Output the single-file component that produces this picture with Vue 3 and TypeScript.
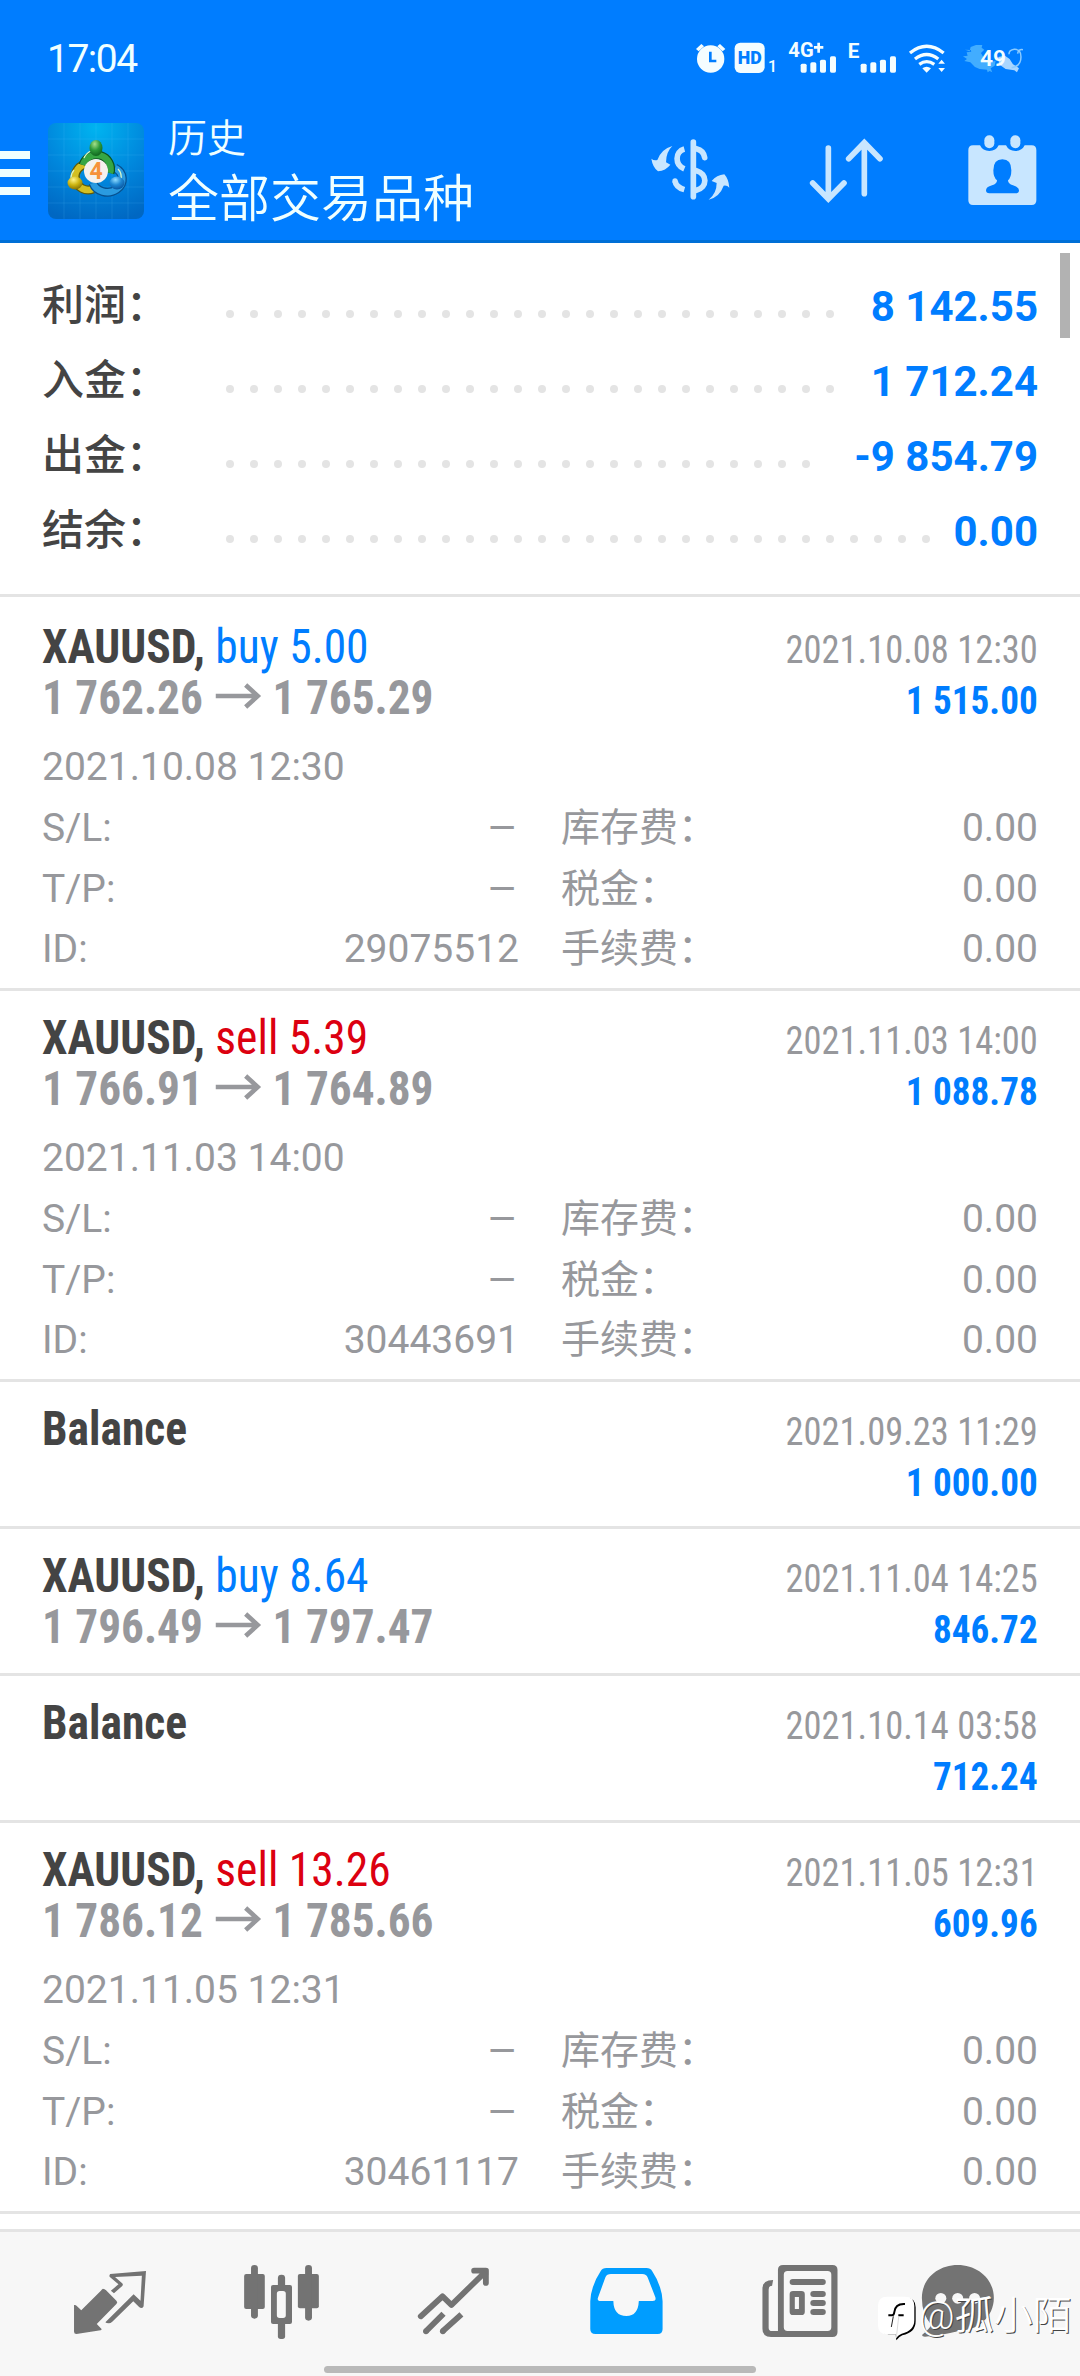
<script setup lang="ts">
interface Deal {
  side?: 'buy' | 'sell'
  volume?: string
  open?: string
  close?: string
  time: string
  profit: string
  id?: string
}

interface SummaryRow {
  label: string
  value: string
  dots: number
}

const summary: SummaryRow[] = [
  { label: '利润：', value: '8 142.55', dots: 26 },
  { label: '入金：', value: '1 712.24', dots: 26 },
  { label: '出金：', value: '-9 854.79', dots: 25 },
  { label: '结余：', value: '0.00', dots: 30 },
]

const deals: Deal[] = [
  { side: 'buy', volume: '5.00', open: '1 762.26', close: '1 765.29', time: '2021.10.08 12:30', profit: '1 515.00', id: '29075512' },
  { side: 'sell', volume: '5.39', open: '1 766.91', close: '1 764.89', time: '2021.11.03 14:00', profit: '1 088.78', id: '30443691' },
  { time: '2021.09.23 11:29', profit: '1 000.00' },
  { side: 'buy', volume: '8.64', open: '1 796.49', close: '1 797.47', time: '2021.11.04 14:25', profit: '846.72' },
  { time: '2021.10.14 03:58', profit: '712.24' },
  { side: 'sell', volume: '13.26', open: '1 786.12', close: '1 785.66', time: '2021.11.05 12:31', profit: '609.96', id: '30461117' },
]
</script>

<template>
  <div class="screen">
    <header class="header">
      <div class="status">
        <span class="clock">17:04</span>
        <svg class="status-icons" viewBox="160 115 1000 120" width="333.3" height="40">
          <g fill="#f4fdff">
            <circle cx="213" cy="178" r="41" />
            <path d="M169 148l16-15 8 7-16 15zM257 148l-16-15-8 7 16 15z" />
            <rect x="285" y="129" width="90" height="91" rx="17" />
            <rect x="483" y="192" width="18" height="27" rx="5" />
            <rect x="512" y="188" width="18" height="31" rx="5" />
            <rect x="541" y="180" width="18" height="39" rx="5" />
            <rect x="571" y="170" width="18" height="49" rx="5" />
            <rect x="663" y="192" width="18" height="27" rx="5" />
            <rect x="692" y="188" width="18" height="31" rx="5" />
            <rect x="721" y="180" width="18" height="39" rx="5" />
            <rect x="751" y="170" width="18" height="49" rx="5" />
            <path d="M848 206q13-9 26 0l-13 13zM906 180l10 12h-20zM906 217l10-12h-20z" />
          </g>
          <path d="M212 156v28h18" fill="none" stroke="#007dff" stroke-width="8" />
          <g fill="none" stroke="#f4fdff" stroke-width="10">
            <path d="M811 160q50-40 101 0M826 178q35-27 70 0M839 194q22-16 45 0" />
          </g>
          <text x="294" y="194" class="st" font-size="54" font-weight="900" fill="#007dff" textLength="72" lengthAdjust="spacingAndGlyphs">HD</text>
          <text x="385" y="216" class="st" font-size="48" font-weight="500">1</text>
          <text x="446" y="173" class="st" font-size="60" font-weight="700" textLength="76" lengthAdjust="spacingAndGlyphs">4G</text>
          <path d="M537 129v30M523 143h28" stroke="#f4fdff" stroke-width="8" />
          <text x="624" y="174" class="st" font-size="62" font-weight="700">E</text>
          <path d="M976 150l14 5 3-13 16-6 19 0-2 8 8 6-10 10 8 14 14 12 22-2-3 14-12 8 5 12-8-4-6 4-2-8-22-2-14-6-14-14-18-4 8-6-12-8 14-2-3-10 14-2-2-5z" fill="#42adff" />
          <path d="M1076 172l20-4 14 10 10 16 10 6 8 6-6 12-8-6-26-4-20-14z" fill="#a9d6ff" />
          <path d="M1116 204q28-4 28-32 0-24-20-23-16 2-16 15M1134 162q2-14 16-12" fill="none" stroke="#8bcbff" stroke-width="4.5" />
          <text x="1021" y="198" class="st" font-size="66" font-weight="600" textLength="78" lengthAdjust="spacingAndGlyphs">49</text>
        </svg>
      </div>
      <div class="toolbar">
        <div class="menu"><i></i><i></i><i></i></div>
        <svg class="logo" viewBox="0 0 96 96" width="96" height="96">
          <defs>
            <radialGradient id="bg" cx=".5" cy=".05" r="1">
              <stop offset="0" stop-color="#00b4f0" />
              <stop offset=".55" stop-color="#0086dc" />
              <stop offset="1" stop-color="#0067c2" />
            </radialGradient>
            <radialGradient id="gr" cx=".4" cy=".25" r=".8"><stop offset="0" stop-color="#a5e08a" /><stop offset=".5" stop-color="#2c9a3a" /><stop offset="1" stop-color="#0d5f1d" /></radialGradient>
            <radialGradient id="ye" cx=".4" cy=".25" r=".8"><stop offset="0" stop-color="#fff48a" /><stop offset=".5" stop-color="#cdb512" /><stop offset="1" stop-color="#7d6c05" /></radialGradient>
            <radialGradient id="bl" cx=".4" cy=".25" r=".8"><stop offset="0" stop-color="#8fdcff" /><stop offset=".5" stop-color="#1d86d2" /><stop offset="1" stop-color="#07509a" /></radialGradient>
          </defs>
          <rect width="96" height="96" rx="8" fill="url(#bg)" />
          <path d="M16 0v96M32 0v96M48 0v96M64 0v96M80 0v96M0 16h96M0 32h96M0 48h96M0 64h96M0 80h96" stroke="#5fd0ff" stroke-opacity=".15" stroke-width="1" />
          <g fill="none">
            <path d="M45 66a13 13 0 1 1-6-25" stroke="#5f5a08" stroke-width="9" />
            <path d="M45 66a13 13 0 1 1-6-25" stroke="#d3bf22" stroke-width="6.5" />
            <path d="M45 60a15 13 0 1 0 22-15" stroke="#07518f" stroke-width="9" />
            <path d="M45 60a15 13 0 1 0 22-15" stroke="#2a9be0" stroke-width="6.5" />
            <path d="M35 42a14 14 0 1 1 27 8" stroke="#0c5420" stroke-width="9" />
            <path d="M35 42a14 14 0 1 1 27 8" stroke="#36a644" stroke-width="6.5" />
            <path d="M36 35a14 13 0 0 1 7-7M26 47a13 12 0 0 0-3 8M70 46q4 4 3 11" stroke="#d8f5c8" stroke-width="1.3" />
          </g>
          <ellipse cx="48" cy="25" rx="6.5" ry="8" fill="url(#gr)" />
          <ellipse cx="27" cy="60" rx="7.5" ry="6.5" fill="url(#ye)" />
          <ellipse cx="69" cy="60" rx="7.5" ry="6.5" fill="url(#bl)" />
          <circle cx="48" cy="48" r="12" fill="#f4f1ee" />
          <text x="48" y="56" text-anchor="middle" class="four">4</text>
        </svg>
        <div class="titles">
          <span class="sub">历史</span>
          <span class="main">全部交易品种</span>
        </div>
        <svg class="tool" viewBox="20 395 260 220" width="86.7" height="73.3">
          <g fill="none" stroke="#c8e6ff" stroke-width="17" stroke-linecap="round">
            <path d="M159 425v164" />
            <path d="M132 446c-29 8-29 48 0 60M132 568q-25-7-28-26" stroke-linecap="butt" />
            <path d="M168 445q22 5 25 27M168 511c34 9 34 51 0 59" />
          </g>
          <circle cx="104" cy="542" r="8" fill="#c8e6ff" />
          <path d="M96 437q-19 18-19 49l13 7q-14 18-37 20-16-12-20-38 8 7 18 4 12-33 45-42z" fill="#c8e6ff" />
          <path d="M205 598q24-18 24-50l-15-6q15-18 38-20 13 14 15 40-7-8-17-6-12 34-45 42z" fill="#c8e6ff" />
        </svg>
        <svg class="tool" viewBox="500 395 240 220" width="80" height="73.3">
          <path d="M564 443v152M517 548l47 48 47-48M672 580v-152M625 475l47-48 47 48" fill="none" stroke="#c8e6ff" stroke-width="17" stroke-linecap="round" />
        </svg>
        <svg class="tool" viewBox="980 395 212 225" width="70.7" height="75">
          <path fill="#c8e6ff" fill-rule="evenodd" d="M998 435h21q8 17 28 17t28-17h22q8 17 28 17t28-17h21q14 0 14 14v151q0 14-14 14H998q-14 0-14-14V449q0-14 14-14zM1086 477q-27 0-27 33 0 22 11 30 0 11-15 15-18 5-18 15 0 9 10 9h79q10 0 10-9 0-10-18-15-15-4-15-15 10-8 10-30 0-33-27-33z" />
          <rect x="1032" y="405" width="30" height="39" rx="15" fill="#c8e6ff" />
          <rect x="1110" y="405" width="30" height="39" rx="15" fill="#c8e6ff" />
        </svg>
      </div>
    </header>

    <main class="content">
      <section class="summary">
        <div v-for="row in summary" :key="row.label" class="sum-row">
          <span class="sum-label">{{ row.label }}</span>
          <span class="dots"><i v-for="n in row.dots" :key="n"></i></span>
          <span class="sum-value">{{ row.value }}</span>
        </div>
      </section>
      <article v-for="(d, i) in deals" :key="i" class="deal">
        <div class="head" :class="{ open: d.id }">
          <div class="left">
            <div class="line cond">
              <template v-if="d.side"><b>XAUUSD,</b> <span :class="d.side">{{ d.side }} {{ d.volume }}</span></template>
              <b v-else>Balance</b>
            </div>
            <div v-if="d.side" class="line cond price">
              <span>{{ d.open }}</span>
              <svg viewBox="0 0 46 26" width="49" height="26" preserveAspectRatio="none"><path d="M0 13h43M30 2l12 11-12 11" fill="none" stroke="#97989c" stroke-width="4.6" /></svg>
              <span>{{ d.close }}</span>
            </div>
          </div>
          <div class="right">
            <div class="line cond">{{ d.time }}</div>
            <div class="line cond profit">{{ d.profit }}</div>
          </div>
        </div>
        <div v-if="d.id" class="details">
          <div class="opened">{{ d.time }}</div>
          <div class="grid">
            <span>S/L:</span><span class="num dash">–</span><span>库存费：</span><span class="num">0.00</span>
            <span>T/P:</span><span class="num dash">–</span><span>税金：</span><span class="num">0.00</span>
            <span>ID:</span><span class="num">{{ d.id }}</span><span>手续费：</span><span class="num">0.00</span>
          </div>
        </div>
      </article>
      <div class="scrollbar"></div>
    </main>

    <nav class="tabs">
      <svg viewBox="69.7 126 499.5 432" preserveAspectRatio="none">
        <g fill="#737373">
          <path d="M299 296q5 0 9 5l30 31q5 5 0 10l-57 60 14 15q0 4-3 4l-70 11q-7 0-7-7v-80q5-1 8 3l13 13 57-59q3-4 6-6z" />
          <path d="M424 243l-7 106q-1 5-6 5-4 0-7-3l-17-17-61 61q-5 5-10 5-8 0-10-3l82-84 20 19 4-75-78 4 20 18q5 4 1 9l-24 22-9-8 22-19-25-22q-3-3 1-9z" />
        </g>
      </svg>
      <svg viewBox="569.2 126 499.5 432" preserveAspectRatio="none">
        <g fill="#737373">
          <rect x="709" y="252" width="60" height="105" rx="6" />
          <rect x="729" y="225" width="20" height="161" rx="10" />
          <rect x="865" y="252" width="61" height="103" rx="6" />
          <rect x="886" y="225" width="20" height="167" rx="10" />
          <rect x="807" y="254" width="21" height="40" rx="10" />
          <rect x="807" y="390" width="21" height="57" rx="8" />
          <path fill-rule="evenodd" d="M793 285h49q6 0 6 6v105q0 6-6 6h-49q-6 0-6-6V291q0-6 6-6zM812 303q-8 0-8 8v65q0 8 8 8h10q8 0 8-8v-65q0-8-8-8z" />
        </g>
      </svg>
      <svg viewBox="1068.7 126 499.5 432" preserveAspectRatio="none">
        <g fill="none" stroke="#737373" stroke-width="17" stroke-linecap="round" stroke-linejoin="round">
          <path d="M1222 379l63-60 26 26 96-97M1377 242h34v37" />
          <path d="M1237 424l51-53M1285 424l55-51" stroke-linecap="butt" />
        </g>
        <g fill="#737373">
          <circle cx="1237" cy="424" r="8.5" />
          <circle cx="1286" cy="424" r="8.5" />
          <path d="M1400 236h18v20z" />
        </g>
      </svg>
      <svg viewBox="0 126 499.5 432" preserveAspectRatio="none">
        <path fill="#009dff" fill-rule="evenodd" d="M193 234h116q12 0 17 10 28 43 30 90v83q0 15-14 15H161q-15 0-15-15v-83q2-47 30-90 5-10 17-10zM206 252q-12 0-16 10l-22 62q-2 9 8 9h37q1 45 38 45 34 0 36-45h40q11 0 8-11l-22-59q-4-11-16-11z" />
      </svg>
      <svg viewBox="499.5 126 499.5 432" preserveAspectRatio="none">
        <path fill="#737373" fill-rule="evenodd" d="M706 225h143q15 0 15 15v186q0 15-15 15H671q-25 0-25-25V296q0-26 31-26l-3 17q-10 0-10 12v114q0 10 10 10h17V240q0-15 15-15zM719 243q-11 0-11 11v158q0 11 11 11h116q11 0 11-11V254q0-11-11-11z" />
        <rect x="725" y="267" width="105" height="18" rx="9" fill="#737373" />
        <path fill="#737373" fill-rule="evenodd" d="M735 303h24q10 0 10 10v52q0 10-10 10h-24q-10 0-10-10v-52q0-10 10-10zM740 321v36h12v-36z" />
        <rect x="785" y="303" width="45" height="18" rx="9" fill="#737373" />
        <rect x="785" y="330" width="45" height="18" rx="9" fill="#737373" />
        <rect x="785" y="357" width="45" height="18" rx="9" fill="#737373" />
      </svg>
      <svg viewBox="999 126 499.5 432" preserveAspectRatio="none">
        <path d="M1213 225c58 0 105 42 105 99s-47 99-105 99q-18 8-95 17-10 0-8-6 22-18 26-30-27-32-27-80c0-57 46-99 104-99z" fill="#737373" />
        <g fill="#f7f7f7"><circle cx="1164" cy="325" r="16" /><circle cx="1213" cy="325" r="16" /><circle cx="1262" cy="325" r="16" /></g>
      </svg>
      <div class="home"></div>
      <div class="mark">
        <svg viewBox="50 130 120 145" width="40" height="48.3">
          <path d="M82 145h56q28 0 28 28v42q0 34-40 42-8 3-18 15l-2-18H84q-28-3-28-30v-51q0-28 26-28z" fill="#000" />
          <path d="M80 141h54q28 0 28 28v42q0 32-38 41-8 3-17 13l-1-11H80q-27 0-27-28v-57q0-28 27-28z" fill="#fff" />
          <path d="M84 197h11q6 0 7-10 3-26 32-24M114 197h16" fill="none" stroke="#000" stroke-width="6" />
          <path d="M93 232l6-32" fill="none" stroke="#222" stroke-width="3" />
          <path d="M108 264l7-62" fill="none" stroke="#ddd" stroke-width="3" />
        </svg>
        <span>@孤小陌</span>
      </div>
    </nav>
  </div>
</template>

<style>
body {
  margin: 0;
  background: #fff;
}
</style>

<style scoped>
.screen {
  width: 1080px;
  height: 2376px;
  overflow: hidden;
  display: flex;
  flex-direction: column;
  background: #fff;
  font-family: Roboto, "Noto Sans CJK SC", sans-serif;
  color: #97989c;
}
.header {
  height: 243px;
  flex: none;
  box-sizing: border-box;
  background: #007dff;
  border-bottom: 3px solid #006fd6;
  color: #f0ffff;
}
.status {
  height: 110px;
  display: flex;
  justify-content: space-between;
  padding: 0 53.3px 0 47px;
}
.status-icons {
  margin-top: 38.3px;
}
.st {
  font-family: Roboto, sans-serif;
  fill: #f4fdff;
}
.st[fill] {
  fill: #007dff;
}
.clock {
  font-size: 39px;
  font-weight: 450;
  letter-spacing: -1.5px;
  line-height: 46px;
  margin-top: 36px;
}
.toolbar {
  display: flex;
  height: 130px;
}
.toolbar > * {
  flex: none;
}
.menu {
  display: flex;
  flex-direction: column;
  gap: 10px;
  width: 48px;
  padding-top: 41px;
}
.menu i {
  width: 30px;
  height: 8px;
  background: #f0ffff;
}
.logo {
  margin-top: 13px;
}
.four {
  font: 700 23px Roboto, sans-serif;
  fill: #f6923a;
}
.titles {
  display: flex;
  flex-direction: column;
  width: 478.7px;
  margin-left: 24px;
  padding-top: 1px;
  box-sizing: border-box;
  font-weight: 350;
}
.sub {
  font-size: 39px;
  line-height: 56px;
}
.main {
  font-size: 51px;
  line-height: 66px;
}
.tool {
  margin-top: 21.7px;
  margin-right: 73.3px;
}
.tool + .tool {
  margin-right: 80px;
}
.tool:last-child {
  margin-right: 0;
}
.content {
  position: relative;
  height: 1986px;
  flex: none;
  overflow: hidden;
}
.summary {
  box-sizing: border-box;
  height: 354px;
  margin-bottom: 3px;
  padding: 25px 42px 0;
  border-bottom: 3px solid #e4e4e4;
}
.sum-row {
  display: flex;
  height: 75px;
  line-height: 75px;
  font-size: 42px;
  font-weight: 700;
}
.sum-label {
  width: 184px;
  color: #444;
  font-weight: 500;
}
.dots {
  flex: 1;
  display: flex;
  gap: 16px;
  padding-top: 42px;
}
.dots i {
  width: 8px;
  height: 8px;
  border-radius: 50%;
  background: #e4e4e4;
}
.sum-value {
  line-height: 77px;
  color: #007dff;
}
.deal {
  border-bottom: 3px solid #e4e4e4;
}
.head {
  display: flex;
  justify-content: space-between;
  height: 102px;
  padding: 21px 42px;
}
.head.open {
  padding-bottom: 14px;
}
.line {
  height: 51px;
  line-height: 51px;
  white-space: nowrap;
}
.left {
  font-size: 48px;
}
.left .line {
  transform: scaleX(0.948);
  transform-origin: left;
}
.left b {
  color: #444;
}
.buy {
  color: #007dff;
}
.sell {
  color: #dc0010;
}
.left .price {
  display: flex;
  font-weight: 700;
  transform: scaleX(0.943);
}
.price svg {
  margin: 11px 12px 0 13px;
}
.right {
  padding-top: 4px;
  font-size: 39px;
  text-align: right;
}
.right .line {
  transform: scaleX(0.935);
  transform-origin: right;
}
.right .profit {
  color: #007dff;
  font-weight: 700;
  transform: scaleX(0.952);
}
.cond {
  font-family: "Roboto Condensed", Roboto, sans-serif;
  font-stretch: 75%;
}
.details {
  height: 251px;
  padding: 0 42px;
  font-size: 39px;
}
.opened {
  height: 61px;
  line-height: 61px;
}
.grid {
  display: grid;
  grid-template-columns: 140px 337px 1fr 200px;
  grid-auto-rows: 60.5px;
  line-height: 60.5px;
}
.grid > :nth-child(4n + 3) {
  padding-left: 42px;
}
.num {
  text-align: right;
}
.dash {
  transform: translateX(-1px) scaleX(1.22);
  transform-origin: right;
}
.scrollbar {
  position: absolute;
  right: 10px;
  top: 10px;
  width: 10px;
  height: 85px;
  background: #b2b2b2;
}
.tabs {
  position: relative;
  box-sizing: border-box;
  height: 147px;
  flex: none;
  display: flex;
  padding: 0 24px;
  background: #f7f7f7;
  border-top: 3px solid #e4e4e4;
}
.tabs > svg {
  width: 172px;
  height: 144px;
}
.home {
  position: absolute;
  left: 324px;
  bottom: 3px;
  width: 432px;
  height: 7px;
  border-radius: 4px;
  background: #b9b9b9;
}
.mark {
  position: absolute;
  left: 877px;
  top: 61px;
  display: flex;
  gap: 2px;
  color: #fff;
  font-size: 39px;
  font-weight: 350;
  line-height: 47px;
  text-shadow: 1px 1px 0 #444;
}
</style>
